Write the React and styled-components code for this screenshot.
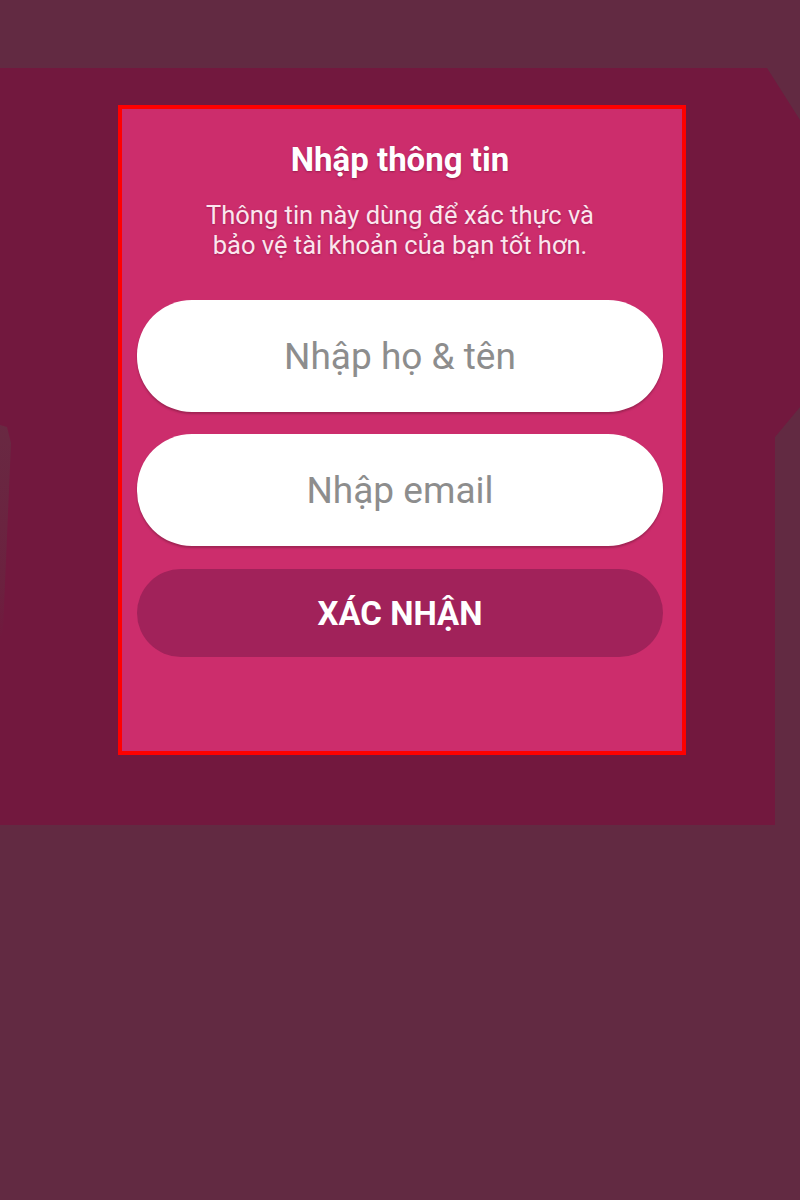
import styled, { createGlobalStyle } from 'styled-components';

const GlobalStyle = createGlobalStyle`
  html, body {
    margin: 0;
    padding: 0;
    background: #622a42;
  }
  #root {
    min-height: 1200px;
    font-family: Roboto, "Noto Sans", "Liberation Sans", sans-serif;
  }
`;

const Page = styled.div`
  width: 800px;
  height: 1200px;
  padding-top: 68px;
  box-sizing: border-box;
  background: #622a42;
`;

// dimmed backdrop behind the dialog, with its ragged edges
const Backdrop = styled.div`
  position: relative;
  width: 800px;
  height: 757px;
  padding: 37px 0 0 118px;
  box-sizing: border-box;
  background: #72183e;
  clip-path: polygon(0 0, 767px 0, 800px 52px, 800px 339px, 775px 369px, 775px 100%, 0 100%);
`;

const EdgeSliver = styled.div`
  position: absolute;
  left: 0;
  top: 357px;
  width: 12px;
  height: 215px;
  background: linear-gradient(180deg, #653044 0%, #68253f 75%, rgba(114, 24, 62, 0) 100%);
  clip-path: polygon(0 0, 7px 2px, 11px 18px, 3px 205px, 0 215px);
  opacity: 0.7;
`;

const Dialog = styled.div`
  width: 568px;
  height: 650px;
  box-sizing: border-box;
  border: 4px solid #ff0000;
  background: #cc2d6c;
  display: flex;
  flex-direction: column;
  align-items: center;
  padding: 32px 19px 0 15px;
`;

const Title = styled.h2`
  margin: 0;
  font-size: 33px;
  font-weight: 700;
  color: #ffffff;
  text-shadow: 0 1px 2px rgba(90, 10, 40, 0.45);
  line-height: 38px;
`;

const Subtitle = styled.p`
  margin: 21px 0 0;
  font-size: 25.5px;
  line-height: 30px;
  color: #fbe6ee;
  text-align: center;
  text-shadow: 0 1px 2px rgba(90, 10, 40, 0.35);
`;

const Form = styled.div`
  align-self: stretch;
  display: flex;
  flex-direction: column;
  gap: 22px;
  margin-top: 40px;
`;

const Field = styled.input`
  height: 110px;
  border: none;
  border-radius: 55px;
  background: #ffffff;
  box-shadow: 0 2px 2px rgba(80, 20, 40, 0.35);
  text-align: center;
  font-family: Roboto, "Noto Sans", sans-serif;
  font-size: 37px;
  color: #333;
  outline: none;

  &::placeholder {
    color: #8d8d8d;
  }
`;

const Submit = styled.button`
  height: 88px;
  margin-top: 1px;
  border: none;
  border-radius: 44px;
  background: #a1225a;
  color: #ffffff;
  font-family: Roboto, "Noto Sans", sans-serif;
  font-size: 33px;
  font-weight: 700;
  cursor: pointer;
`;

export default function App() {
  return (
    <>
      <GlobalStyle />
      <Page>
        <Backdrop>
          <EdgeSliver />
          <Dialog>
            <Title>Nhập thông tin</Title>
            <Subtitle>
              Thông tin này dùng để xác thực và
              <br />
              bảo vệ tài khoản của bạn tốt hơn.
            </Subtitle>
            <Form>
              <Field placeholder="Nhập họ & tên" />
              <Field placeholder="Nhập email" />
              <Submit>XÁC NHẬN</Submit>
            </Form>
          </Dialog>
        </Backdrop>
      </Page>
    </>
  );
}
